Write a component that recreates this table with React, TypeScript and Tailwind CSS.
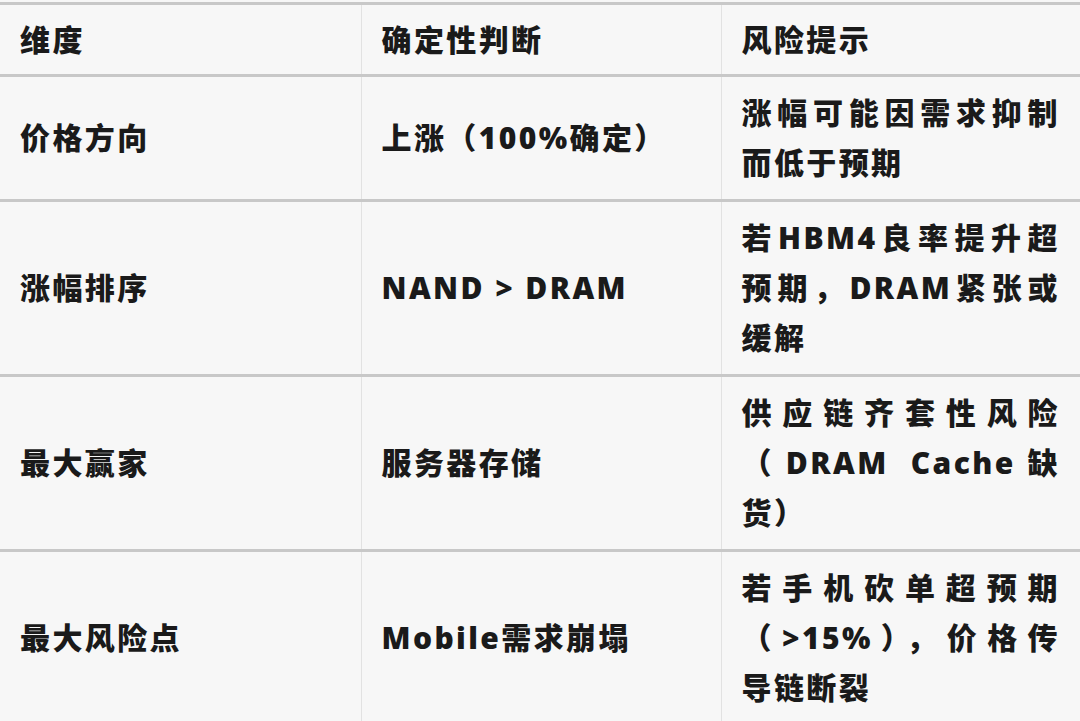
type Row = {
  dim: string;
  judge: string;
  risk: string[];
};

const rows: Row[] = [
  { dim: '价格方向', judge: '上涨（100%确定）', risk: ['涨幅可能因需求抑制', '而低于预期'] },
  { dim: '涨幅排序', judge: 'NAND > DRAM', risk: ['若HBM4良率提升超', '预期，DRAM紧张或', '缓解'] },
  { dim: '最大赢家', judge: '服务器存储', risk: ['供应链齐套性风险', '（DRAM Cache缺', '货）'] },
  { dim: '最大风险点', judge: 'Mobile需求崩塌', risk: ['若手机砍单超预期', '（>15%），价格传', '导链断裂'] },
];

const cell = 'px-[20px] align-middle border-x border-x-[#e2e2e2] first:border-l-0 last:border-r-0';

export default function App() {
  return (
    <div className="w-[1080px] h-[721px] overflow-hidden bg-[#f7f7f7] pt-[2px] font-['Open_Sans','Noto_Sans_CJK_SC',sans-serif] font-extrabold text-[#1a1a1a] text-[30px] leading-[50px] tracking-[2.4px]">
      <table className="w-[1080px] table-fixed border-collapse">
        <colgroup>
          <col className="w-[361px]" />
          <col className="w-[360px]" />
          <col className="w-[359px]" />
        </colgroup>
        <thead>
          <tr className="border-y-[3px] border-y-[#c8c8c8]">
            <th className={`${cell} py-[9.5px] text-left font-extrabold`}>维度</th>
            <th className={`${cell} py-[9.5px] text-left font-extrabold`}>确定性判断</th>
            <th className={`${cell} py-[9.5px] text-left font-extrabold`}>风险提示</th>
          </tr>
        </thead>
        <tbody>
          {rows.map((r) => (
            <tr key={r.dim} className="border-b-[3px] border-b-[#c8c8c8]">
              <td className={`${cell} py-[11px]`}>{r.dim}</td>
              <td className={`${cell} py-[11px]`}>{r.judge}</td>
              <td className={`${cell} py-[11px]`}>
                {r.risk.map((line, i) => (
                  <span
                    key={i}
                    className={
                      i < r.risk.length - 1
                        ? 'block text-justify [text-align-last:justify] whitespace-nowrap'
                        : 'block whitespace-nowrap'
                    }
                  >
                    {line}
                  </span>
                ))}
              </td>
            </tr>
          ))}
        </tbody>
      </table>
    </div>
  );
}
